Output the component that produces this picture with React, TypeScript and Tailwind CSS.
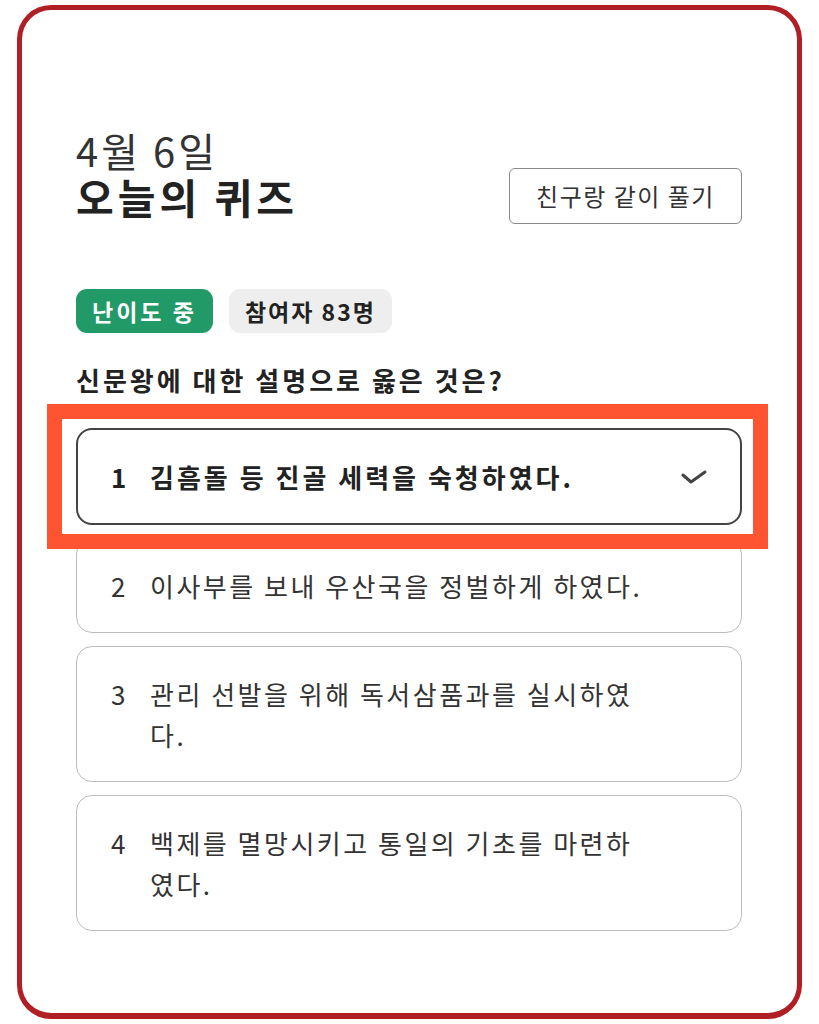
const font = { fontFamily: '"Noto Sans CJK KR", "Noto Sans", sans-serif' };

type Option = { no: number; text: string };

const options: Option[] = [
  { no: 1, text: "김흠돌 등 진골 세력을 숙청하였다." },
  { no: 2, text: "이사부를 보내 우산국을 정벌하게 하였다." },
  { no: 3, text: "관리 선발을 위해 독서삼품과를 실시하였다." },
  { no: 4, text: "백제를 멸망시키고 통일의 기초를 마련하였다." },
];

function CheckMark() {
  return (
    <svg width="26" height="14" viewBox="0 0 26 14" fill="none">
      <polyline
        points="2,5 10,12 24,2"
        stroke="#444"
        strokeWidth="3"
        strokeLinecap="round"
        strokeLinejoin="round"
      />
    </svg>
  );
}

function OptionCard({ opt, selected }: { opt: Option; selected?: boolean }) {
  return (
    <div
      className={
        selected
          ? "flex items-start rounded-[16px] border-2 border-[#444] bg-white px-[33px] py-[26px]"
          : "flex items-start rounded-[16px] border border-[#bdbdbd] bg-white px-[34px] py-[26px]"
      }
    >
      <span
        className={
          selected
            ? "w-[39px] shrink-0 text-[26px] leading-[41px] font-bold text-[#222]"
            : "w-[39px] shrink-0 text-[26px] leading-[41px] text-[#333]"
        }
      >
        {opt.no}
      </span>
      <span
        className={
          selected
            ? "flex-1 text-[26px] leading-[41px] font-bold tracking-[3px] text-[#222]"
            : "flex-1 text-[26px] leading-[41px] tracking-[2.5px] text-[#333]"
        }
      >
        {opt.text}
      </span>
      <span className="flex h-[41px] w-[52px] shrink-0 items-center justify-end">
        {selected && <CheckMark />}
      </span>
    </div>
  );
}

export default function App() {
  return (
    <div className="min-h-screen bg-white pt-[5px] pl-[17px]" style={font}>
      <div className="h-[1014px] w-[785px] rounded-[34px] border-[5px] border-b-[6px] border-[#b01f24] bg-white pt-[117px] pr-[55px] pl-[54px]">
        <div className="flex items-start justify-between">
          <div>
            <div className="text-[40px] leading-[46px] tracking-[3px] text-[#333]">4월 6일</div>
            <div className="text-[41px] leading-[46px] font-bold tracking-[4px] text-[#222]">오늘의 퀴즈</div>
          </div>
          <button className="mt-[41px] h-[56px] w-[233px] rounded-[6px] border border-[#8a8a8a] bg-white text-[24px] tracking-[1.5px] text-[#333]">
            친구랑 같이 풀기
          </button>
        </div>

        <div className="mt-[65px] flex gap-[16px]">
          <span className="flex h-[44px] items-center rounded-[11px] bg-[#229a68] px-[16px] text-[23px] font-bold tracking-[3px] text-white">
            난이도 중
          </span>
          <span className="flex h-[44px] items-center rounded-[11px] bg-[#eeeeee] px-[16px] text-[23px] font-bold tracking-[2px] text-[#222]">
            참여자 83명
          </span>
        </div>

        <div className="mt-[30px] text-[26px] leading-[34px] font-bold tracking-[3px] text-[#222]">
          신문왕에 대한 설명으로 옳은 것은?
        </div>

        <div className="mt-[31px] flex flex-col gap-[13px]">
          <div className="relative">
            <OptionCard opt={options[0]} selected />
            <div className="pointer-events-none absolute -top-[24px] -right-[26px] -bottom-[24px] -left-[29px] border-[15px] border-[#fe5431]" />
          </div>
          {options.slice(1).map((o) => (
            <OptionCard key={o.no} opt={o} />
          ))}
        </div>
      </div>
    </div>
  );
}
